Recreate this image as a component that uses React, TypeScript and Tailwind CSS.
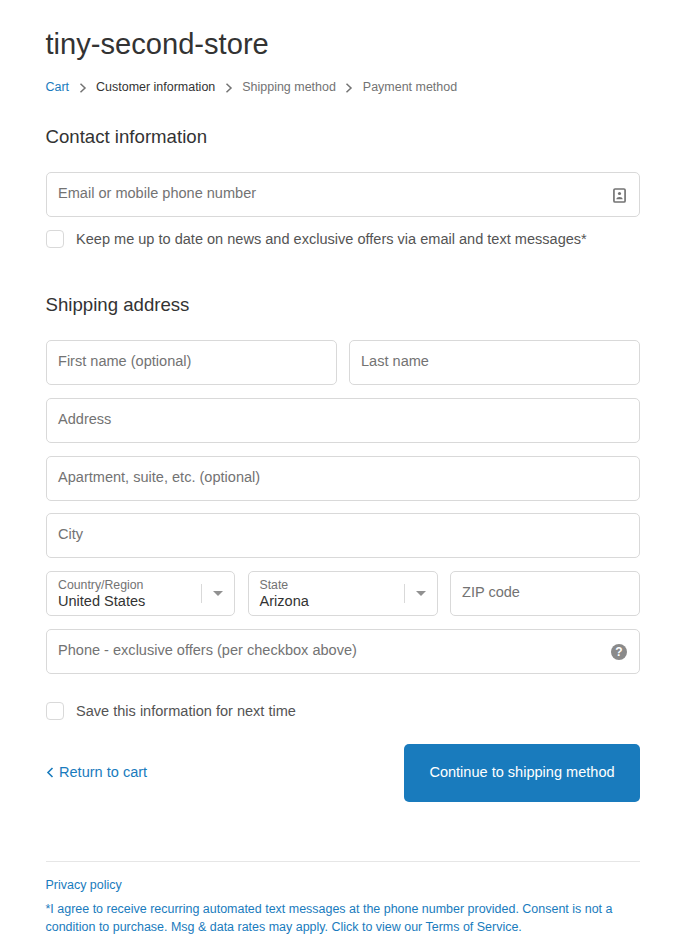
const font = "font-['Liberation_Sans',Arial,sans-serif]";

function Chevron() {
  return (
    <svg viewBox="0 0 10 10" className="w-[10px] h-[10px] text-[#737373] mx-[8.5px] mt-[2px]" fill="none" stroke="currentColor" strokeWidth="1.5">
      <path d="M2.5 0.8 L7 5 L2.5 9.2" />
    </svg>
  );
}

function Field({ label, icon, grow }: { label: string; icon?: React.ReactNode; grow?: boolean }) {
  return (
    <div className={`${grow ? "flex-1 min-w-0" : ""} h-[45px] border border-[#d9d9d9] rounded-[5px] bg-white pl-[11px] pr-[13px] flex items-center justify-between`}>
      <span className="text-[14.56px] leading-[18px] text-[#737373] -mt-[3px]">{label}</span>
      {icon}
    </div>
  );
}

function SelectField({ label, value, className }: { label: string; value: string; className: string }) {
  return (
    <div className={`${className} h-[45px] border border-[#d9d9d9] rounded-[5px] bg-white pl-[11px] flex items-center justify-between`}>
      <div className="flex flex-col">
        <span className="text-[12.3px] leading-[14px] text-[#737373]">{label}</span>
        <span className="text-[14.56px] leading-[18px] text-[#333333]">{value}</span>
      </div>
      <div className="flex items-center">
        <div className="w-px h-[19px] bg-[#d9d9d9]" />
        <svg viewBox="0 0 10 5" className="w-[10px] h-[5px] mx-[11px] text-[#919191]" fill="currentColor">
          <path d="M0 0 H10 L5 5 Z" />
        </svg>
      </div>
    </div>
  );
}

function CheckRow({ label }: { label: string }) {
  return (
    <div className="flex items-center gap-[12px]">
      <div className="w-[18px] h-[18px] border border-[#d9d9d9] rounded-[4px] bg-white shrink-0" />
      <span className="text-[14.56px] leading-[18px] text-[#545454]">{label}</span>
    </div>
  );
}

export default function App() {
  return (
    <div className={`${font} w-[687px] h-[952px] bg-white pl-[46px] pr-[47px] overflow-hidden`}>
      <h1 className="pt-[27px] text-[29.12px] leading-[34px] text-[#333333] -ml-[0.5px]">tiny-second-store</h1>

      <nav className="mt-[17px] flex items-center h-[18px] text-[12.48px] leading-[18px] text-[#737373] -ml-[0.5px]">
        <span className="text-[#197bbd]">Cart</span>
        <Chevron />
        <span className="text-[#333333]">Customer information</span>
        <Chevron />
        <span>Shipping method</span>
        <Chevron />
        <span>Payment method</span>
      </nav>

      <h2 className="mt-[29px] text-[18.64px] leading-[24px] text-[#333333] -ml-[0.5px]">Contact information</h2>
      <div className="mt-[23px]">
        <Field
          label="Email or mobile phone number"
          icon={
            <svg viewBox="0 0 14 16" className="w-[13px] h-[15px] text-[#737373] mt-[1px]">
              <rect x="1" y="1" width="12" height="14" rx="1.2" fill="none" stroke="currentColor" strokeWidth="1.8" />
              <circle cx="7" cy="5.8" r="1.7" fill="currentColor" />
              <path d="M3.6 12 C3.6 8.8 10.4 8.8 10.4 12 Z" fill="currentColor" />
            </svg>
          }
        />
      </div>
      <div className="mt-[13px]">
        <CheckRow label="Keep me up to date on news and exclusive offers via email and text messages*" />
      </div>

      <h2 className="mt-[45px] text-[18.64px] leading-[24px] text-[#333333] -ml-[0.5px]">Shipping address</h2>

      <div className="mt-[23px] flex flex-col gap-[12.8px]">
        <div className="flex gap-[12px]">
          <Field grow label="First name (optional)" />
          <Field grow label="Last name" />
        </div>
        <Field label="Address" />
        <Field label="Apartment, suite, etc. (optional)" />
        <Field label="City" />
        <div className="flex gap-[12.5px]">
          <SelectField label="Country/Region" value="United States" className="w-[189px]" />
          <SelectField label="State" value="Arizona" className="w-[190px]" />
          <Field grow label="ZIP code" />
        </div>
        <Field
          label="Phone - exclusive offers (per checkbox above)"
          icon={
            <div className="w-[16px] h-[16px] rounded-full bg-[#8a8a8a] text-white text-[12px] leading-[16px] font-bold text-center mt-[1px] -mr-[1px]">?</div>
          }
        />
      </div>

      <div className="mt-[28px]">
        <CheckRow label="Save this information for next time" />
      </div>

      <div className="mt-[24px] flex items-center justify-between">
        <div className="flex items-center gap-[5px] text-[#197bbd] -mt-[2px]">
          <svg viewBox="0 0 8 11" className="w-[8px] h-[11px] mt-[2px]" fill="none" stroke="currentColor" strokeWidth="1.6">
            <path d="M6.5 1 L2 5.5 L6.5 10" />
          </svg>
          <span className="text-[14.56px] leading-[18px]">Return to cart</span>
        </div>
        <div className="w-[236px] h-[58px] bg-[#197bbd] rounded-[5px] text-white text-[14.56px] flex items-center justify-center">
          Continue to shipping method
        </div>
      </div>

      <footer className="mt-[59px] border-t border-[#e6e6e6] pt-[14px] text-[12.48px] leading-[18px] text-[#197bbd] -ml-[0.5px]">
        <div>Privacy policy</div>
        <p className="mt-[6px]">
          *I agree to receive recurring automated text messages at the phone number provided. Consent is not a condition to purchase. Msg &amp; data rates may apply. Click to view our Terms of Service.
        </p>
      </footer>
    </div>
  );
}
